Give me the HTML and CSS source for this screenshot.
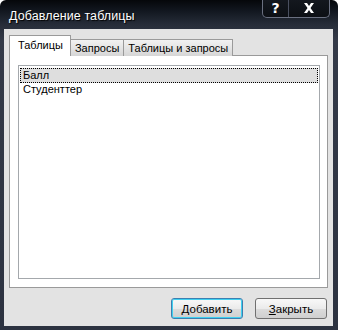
FILE: index.html
```html
<!DOCTYPE html>
<html lang="ru">
<head>
    <meta charset="UTF-8">
    <title>Добавление таблицы</title>
    <link rel="stylesheet" href="styles.css">
</head>
<body>
    <div class="window">
        <div class="titlebar">
            <span class="title">Добавление таблицы</span>
            <div class="caption-buttons">
                <span class="cap-btn help">?</span>
                <span class="cap-btn close">
                    <svg width="14" height="10" viewBox="0 0 14 10">
                        <path d="M2 0h3l2 3 2-3h3l-3.5 5 3.5 5h-3l-2-3-2 3h-3l3.5-5z" fill="#fff"/>
                    </svg>
                </span>
            </div>
        </div>
        <div class="client">
            <div class="tabs">
                <div class="tab active">Таблицы</div>
                <div class="tab">Запросы</div>
                <div class="tab">Таблицы и запросы</div>
            </div>
            <div class="panel">
                <div class="listbox">
                    <div class="item selected">Балл</div>
                    <div class="item">Студенттер</div>
                </div>
            </div>
            <div class="actions">
                <button class="btn default"><u>Д</u>обавить</button>
                <button class="btn"><u>З</u>акрыть</button>
            </div>
        </div>
    </div>
</body>
</html>
```

FILE: styles.css
```css
body {
    margin: 0;
    background: #fff;
    font-family: "Liberation Sans", Arial, sans-serif;
    font-size: 11px;
    color: #000;
}
.window {
    width: 338px;
    height: 330px;
    box-sizing: border-box;
    padding: 0 5px 4px 4px;
    border-radius: 6px 6px 0 0;
    background: linear-gradient(#05070a 0px, #11161e 10px, #262c38 24px, #343a48 40px, #2c3240 330px);
    display: flex;
    flex-direction: column;
}
.titlebar {
    height: 29px;
    flex: none;
    display: flex;
    align-items: flex-start;
    position: relative;
}
.title {
    margin: 9px 0 0 5px;
    font-size: 12.5px;
    color: #fff;
    text-shadow: 1px 1px 1px #000;
    letter-spacing: 0.1px;
}
.caption-buttons {
    position: absolute;
    top: -1px;
    right: 3px;
    display: flex;
    height: 18px;
    border: 1px solid #6a7080;
    border-top: none;
    border-radius: 0 0 5px 5px;
    background: linear-gradient(#14181f, #0c0f14);
    overflow: hidden;
}
.cap-btn {
    display: flex;
    align-items: center;
    justify-content: center;
    color: #fff;
    font-weight: bold;
    font-size: 14px;
    font-family: "DejaVu Sans", sans-serif;
}
.help {
    width: 25px;
    border-right: 1px solid #4a5060;
}
.close {
    width: 40px;
}
.client {
    flex: 1;
    background: #e3e3e3;
    display: flex;
    flex-direction: column;
    padding: 6px 5px 0 5px;
}
.tabs {
    display: flex;
    align-items: flex-end;
    height: 21px;
    position: relative;
    z-index: 1;
    margin-bottom: -1px;
}
.tab {
    height: 16px;
    padding: 0 4px;
    line-height: 17px;
    border: 1px solid #9a9a9a;
    border-bottom: none;
    background: linear-gradient(#f2f2f2, #d6d6d6);
    margin-left: -1px;
}
.tab.active {
    height: 20px;
    line-height: 19px;
    padding: 0 7px 0 8px;
    margin-left: 0;
    background: #fff;
    margin-right: -1px;
    position: relative;
    z-index: 2;
}
.tab.active + .tab {
    margin-left: 0;
}
.panel {
    height: 233px;
    box-sizing: border-box;
    border: 1px solid #9a9a9a;
    background: #fff;
    padding: 9px 7px 8px 8px;
}
.listbox {
    height: 100%;
    box-sizing: border-box;
    border: 1px solid #a4a8ac;
    padding: 2px 1px;
}
.item {
    height: 13px;
    line-height: 13px;
    padding-left: 2px;
    border: 1px dotted transparent;
    margin-bottom: -1px;
}
.item.selected {
    background: #dedede;
    border-color: #000;
}
.actions {
    display: flex;
    justify-content: flex-end;
    gap: 12px;
    padding: 10px 1px 0 0;
}
.btn {
    width: 72px;
    height: 21px;
    font: inherit;
    font-size: 11.5px;
    color: #000;
    border: 1px solid #707070;
    border-radius: 3px;
    background: linear-gradient(#f8f8f8 0%, #ebebeb 50%, #dcdcdc 51%, #cfcfcf 100%);
    padding: 0;
}
.btn u {
    text-decoration: underline;
}
.btn.default {
    border-color: #3c7fb1;
    box-shadow: inset 0 0 0 1px #40d0f0;
}
```
